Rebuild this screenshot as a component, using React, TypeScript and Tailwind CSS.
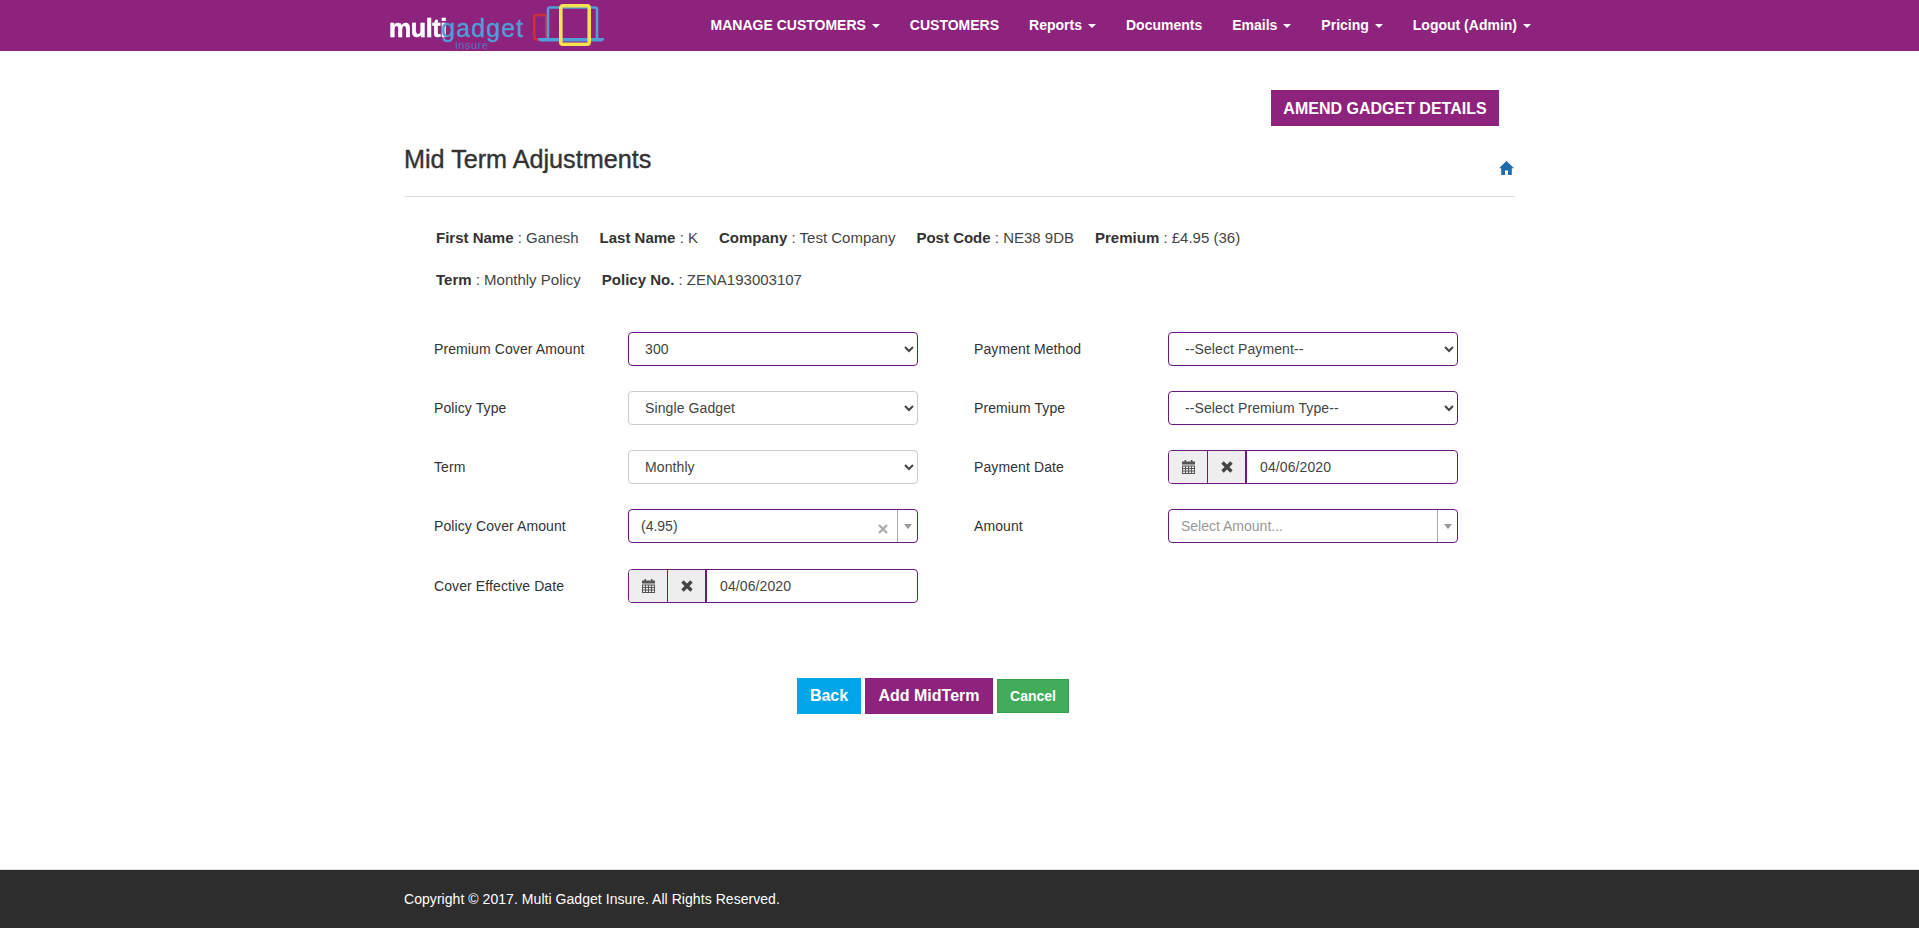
const navItems = [
  { label: 'MANAGE CUSTOMERS', caret: true },
  { label: 'CUSTOMERS', caret: false },
  { label: 'Reports', caret: true },
  { label: 'Documents', caret: false },
  { label: 'Emails', caret: true },
  { label: 'Pricing', caret: true },
  { label: 'Logout (Admin)', caret: true },
];

function Logo() {
  return (
    <div className="flex h-[51px] items-start blur-[0.4px]">
      <div className="relative h-[51px] w-[144px] leading-none">
        <span className="absolute left-0 top-[16px] text-[25px] font-bold tracking-[-0.4px] text-white [-webkit-text-stroke:0.5px_white]">
          multi
        </span>
        <span className="absolute left-[52px] top-[16px] text-[25px] tracking-[1.1px] text-[#4f9fd8] [-webkit-text-stroke:0.4px_#4f9fd8]">
          gadget
        </span>
        <span className="absolute left-[66px] top-[41px] text-[11px] leading-[8px] tracking-[0.6px] text-[#5a76c8]">insure</span>
      </div>
      <svg width="72" height="44" viewBox="0 0 72 44" className="mt-[3px]" fill="none">
        <rect x="1.2" y="12" width="12" height="24.5" rx="2" stroke="#c9303c" strokeWidth="2.5" />
        <path d="M15 36V6.5a2 2 0 0 1 2-2h45a2 2 0 0 1 2 2V36" stroke="#4f9fd8" strokeWidth="2.5" />
        <path d="M5 35h66a3 3 0 0 1-3 3.5H8a3 3 0 0 1-3-3.5z" fill="#4f9fd8" />
        <rect x="27.8" y="2.8" width="28.4" height="38.4" rx="2" stroke="#f6e24f" strokeWidth="3.6" />
      </svg>
    </div>
  );
}

function Header() {
  return (
    <header className="h-[51px] bg-[#8e237e]">
      <div className="mx-auto flex h-full w-[1171px] items-center pl-[15px] pr-[14px]">
        <Logo />
        <nav className="ml-auto flex items-center gap-[30px] text-[14px] font-bold text-white">
          {navItems.map((item) => (
            <a key={item.label} className="flex items-center whitespace-nowrap">
              {item.label}
              {item.caret && (
                <span className="ml-[6px] h-0 w-0 border-x-[4px] border-t-[4px] border-x-transparent border-t-white" />
              )}
            </a>
          ))}
        </nav>
      </div>
    </header>
  );
}

function Info({ name, value }: { name: string; value: string }) {
  return (
    <span className="whitespace-nowrap">
      <b className="font-bold text-[#333]">{name}</b> : {value}
    </span>
  );
}

function Field({ label, children }: { label: string; children: React.ReactNode }) {
  return (
    <div className="flex h-[34px] items-center">
      <label className="w-[194px] shrink-0 text-[14px] tracking-[0.1px] text-[#333]">{label}</label>
      <div className="w-[290px]">{children}</div>
    </div>
  );
}

function Select({ value, plain }: { value: string; plain?: boolean }) {
  return (
    <select
      defaultValue={value}
      className={`block h-[34px] w-full rounded-[4px] border bg-white pl-[12px] pr-[2px] text-[14px] tracking-[0.1px] text-[#444] ${
        plain ? 'border-[#ccc]' : 'border-[#6a1b7a]'
      }`}
    >
      <option>{value}</option>
    </select>
  );
}

function CalendarIcon() {
  return (
    <svg width="13" height="14" viewBox="0 0 13 14" fill="#555">
      <rect x="2.5" y="0" width="1.6" height="3" />
      <rect x="8.9" y="0" width="1.6" height="3" />
      <rect x="0" y="1.5" width="13" height="3" />
      <path d="M0 5.5h13V14H0zM1 6.5V8h2V6.5zm3 0V8h2V6.5zm3 0V8h2V6.5zm3 0V8h2V6.5zM1 9v1.5h2V9zm3 0v1.5h2V9zm3 0v1.5h2V9zm3 0v1.5h2V9zM1 11.5V13h2v-1.5zm3 0V13h2v-1.5zm3 0V13h2v-1.5zm3 0V13h2v-1.5z" fillRule="evenodd" />
    </svg>
  );
}

function RemoveIcon() {
  return (
    <svg width="12" height="12" viewBox="0 0 12 12" stroke="#444" strokeWidth="3.4">
      <path d="M1.5 1.5l9 9M10.5 1.5l-9 9" />
    </svg>
  );
}

function DateField({ value }: { value: string }) {
  return (
    <div className="flex h-[34px] w-full overflow-hidden rounded-[4px] border border-[#6a1b7a] bg-white text-[14px] text-[#444]">
      <span className="flex w-[39px] items-center justify-center border-r border-[#6a1b7a] bg-[#eee]">
        <CalendarIcon />
      </span>
      <span className="flex w-[39px] items-center justify-center border-r-2 border-[#6a1b7a] bg-[#eee]">
        <RemoveIcon />
      </span>
      <span className="flex flex-1 items-center pl-[13px] tracking-[0.1px]">{value}</span>
    </div>
  );
}

function Combo({ value, placeholder }: { value?: string; placeholder?: string }) {
  return (
    <div className="flex h-[34px] w-full items-center rounded-[4px] border border-[#6a1b7a] bg-white text-[14px]">
      <span className={`flex-1 pl-[12px] ${value ? 'text-[#444]' : 'text-[#999]'}`}>{value ?? placeholder}</span>
      {value && (
        <svg width="10" height="10" viewBox="0 0 10 10" stroke="#aaa" strokeWidth="2.2" className="mr-[9px] mt-[6px]">
          <path d="M1 1l8 8M9 1l-8 8" />
        </svg>
      )}
      <span className="flex h-full w-[20px] items-center justify-center border-l border-[#aaa]">
        <span className="h-0 w-0 border-x-[4px] border-t-[5px] border-x-transparent border-t-[#999]" />
      </span>
    </div>
  );
}

function HomeIcon() {
  return (
    <svg width="15" height="14" viewBox="0 0 15 14" fill="#1f6aa8">
      <path d="M7.5 0 15 7.2h-2.2V14H9V9.5H6V14H2.2V7.2H0z" />
    </svg>
  );
}

export default function App() {
  return (
    <div className="bg-white font-['Liberation_Sans',Arial,sans-serif] text-[#333]">
      <Header />
      <main className="mx-auto h-[818px] w-[1171px] pl-[30px] pr-[31px]">
        <div className="flex justify-end pr-[15px] pt-[39px]">
          <button className="h-[36px] w-[228px] bg-[#8e237e] pt-[1px] text-[16px] font-bold text-white">
            AMEND GADGET DETAILS
          </button>
        </div>
        <div className="mt-[19px] flex h-[52px] justify-between border-b border-[#ddd]">
          <h1 className="mt-[-1px] text-[25.2px] font-medium leading-[30px] text-[#333] [-webkit-text-stroke:0.4px_#333]">
            Mid Term Adjustments
          </h1>
          <div className="mt-[16px]">
            <HomeIcon />
          </div>
        </div>

        <div className="mt-[31px] pl-[32px] text-[15px] leading-[20px] text-[#444]">
          <div className="flex gap-[21px]">
            <Info name="First Name" value="Ganesh" />
            <Info name="Last Name" value="K" />
            <Info name="Company" value="Test Company" />
            <Info name="Post Code" value="NE38 9DB" />
            <Info name="Premium" value="£4.95 (36)" />
          </div>
          <div className="mt-[22px] flex gap-[21px]">
            <Info name="Term" value="Monthly Policy" />
            <Info name="Policy No." value="ZENA193003107" />
          </div>
        </div>

        <div className="mt-[42px] grid grid-cols-[540px_1fr] pl-[30px]">
          <div className="flex flex-col gap-[25px]">
            <Field label="Premium Cover Amount"><Select value="300" /></Field>
            <Field label="Policy Type"><Select value="Single Gadget" plain /></Field>
            <Field label="Term"><Select value="Monthly" plain /></Field>
            <Field label="Policy Cover Amount"><Combo value="(4.95)" /></Field>
            <div className="mt-px">
              <Field label="Cover Effective Date"><DateField value="04/06/2020" /></Field>
            </div>
          </div>
          <div className="flex flex-col gap-[25px]">
            <Field label="Payment Method"><Select value="--Select Payment--" /></Field>
            <Field label="Premium Type"><Select value="--Select Premium Type--" /></Field>
            <Field label="Payment Date"><DateField value="04/06/2020" /></Field>
            <Field label="Amount"><Combo placeholder="Select Amount..." /></Field>
          </div>
        </div>

        <div className="mt-[75px] flex items-center justify-center gap-[4px] pr-[52px] font-bold text-white">
          <button className="h-[36px] w-[64px] bg-[#00a6e9] text-[16px]">Back</button>
          <button className="h-[36px] w-[128px] bg-[#8e237e] text-[16px]">Add MidTerm</button>
          <button className="h-[34px] w-[72px] border border-[#35a04c] bg-[#41ad5a] text-[14px]">Cancel</button>
        </div>
      </main>
      <footer className="h-[59px] border-t border-[#ddd] bg-[#2d2d2d]">
        <div className="mx-auto flex h-full w-[1171px] items-center px-[30px] pt-[1px] text-[14px] tracking-[0.05px] text-white">
          Copyright © 2017. Multi Gadget Insure. All Rights Reserved.
        </div>
      </footer>
    </div>
  );
}
